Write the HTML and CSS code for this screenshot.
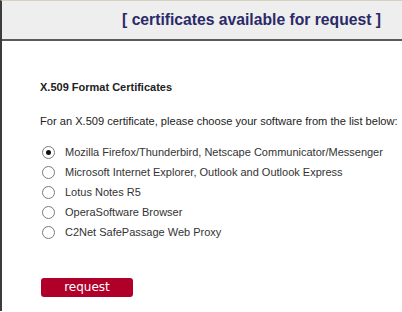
FILE: index.html
```html
<!DOCTYPE html>
<html>
<head>
<meta charset="utf-8">
<link rel="stylesheet" href="styles.css">
</head>
<body>
<div class="page">
  <div class="header">
    <h1 class="title">[ certificates available for request ]</h1>
  </div>
  <div class="content">
    <h2 class="heading">X.509 Format Certificates</h2>
    <p class="intro">For an X.509 certificate, please choose your software from the list below:</p>
    <ul class="options">
      <li class="option"><span class="radio checked"></span><span class="label">Mozilla Firefox/Thunderbird, Netscape Communicator/Messenger</span></li>
      <li class="option"><span class="radio"></span><span class="label">Microsoft Internet Explorer, Outlook and Outlook Express</span></li>
      <li class="option"><span class="radio"></span><span class="label">Lotus Notes R5</span></li>
      <li class="option"><span class="radio"></span><span class="label">OperaSoftware Browser</span></li>
      <li class="option"><span class="radio"></span><span class="label">C2Net SafePassage Web Proxy</span></li>
    </ul>
    <button class="btn">request</button>
  </div>
</div>
</body>
</html>
```
FILE: styles.css
```css
html, body {
  margin: 0;
  padding: 0;
  background: #ffffff;
}
body {
  font-family: "Liberation Sans", Arial, sans-serif;
  width: 402px;
  height: 312px;
  overflow: hidden;
}
.page {
  border-top: 1px solid #d8d0c0;
  border-left: 2px solid #3c3c3c;
  height: 311px;
  box-sizing: border-box;
}
.header {
  background: #eeeeee;
  border-bottom: 2px solid #5a5a5a;
  height: 40px;
  box-sizing: border-box;
  display: flex;
  justify-content: flex-end;
  align-items: center;
  padding-right: 21px;
}
.title {
  margin: 0;
  font-size: 15.7px;
  font-weight: bold;
  color: #2a2a68;
}
.content {
  padding-left: 38px;
}
.heading {
  margin: 39px 0 0 0;
  font-size: 11px;
  font-weight: bold;
  color: #222;
  line-height: 14px;
}
.intro {
  margin: 20px 0 0 0;
  font-size: 11.1px;
  color: #222;
  line-height: 14px;
  white-space: nowrap;
}
.options {
  list-style: none;
  margin: 14px 0 0 0;
  padding: 0;
}
.option {
  display: flex;
  align-items: center;
  height: 20px;
}
.radio {
  width: 11px;
  height: 11px;
  border: 1px solid #7a7a7a;
  border-radius: 50%;
  box-sizing: content-box;
  margin-left: 2px;
  margin-right: 10px;
  background: #fff;
  position: relative;
}
.radio.checked::after {
  content: "";
  position: absolute;
  left: 3px;
  top: 3px;
  width: 5px;
  height: 5px;
  border-radius: 50%;
  background: #111;
}
.label {
  font-size: 11px;
  color: #333;
  white-space: nowrap;
}
.btn {
  margin: 36px 0 0 1px;
  width: 92px;
  height: 19px;
  border: none;
  border-radius: 3px;
  background: #b0002a;
  color: #fff;
  font-family: "DejaVu Sans", Verdana, sans-serif;
  font-size: 12px;
  padding: 0;
  line-height: 19px;
}
```
